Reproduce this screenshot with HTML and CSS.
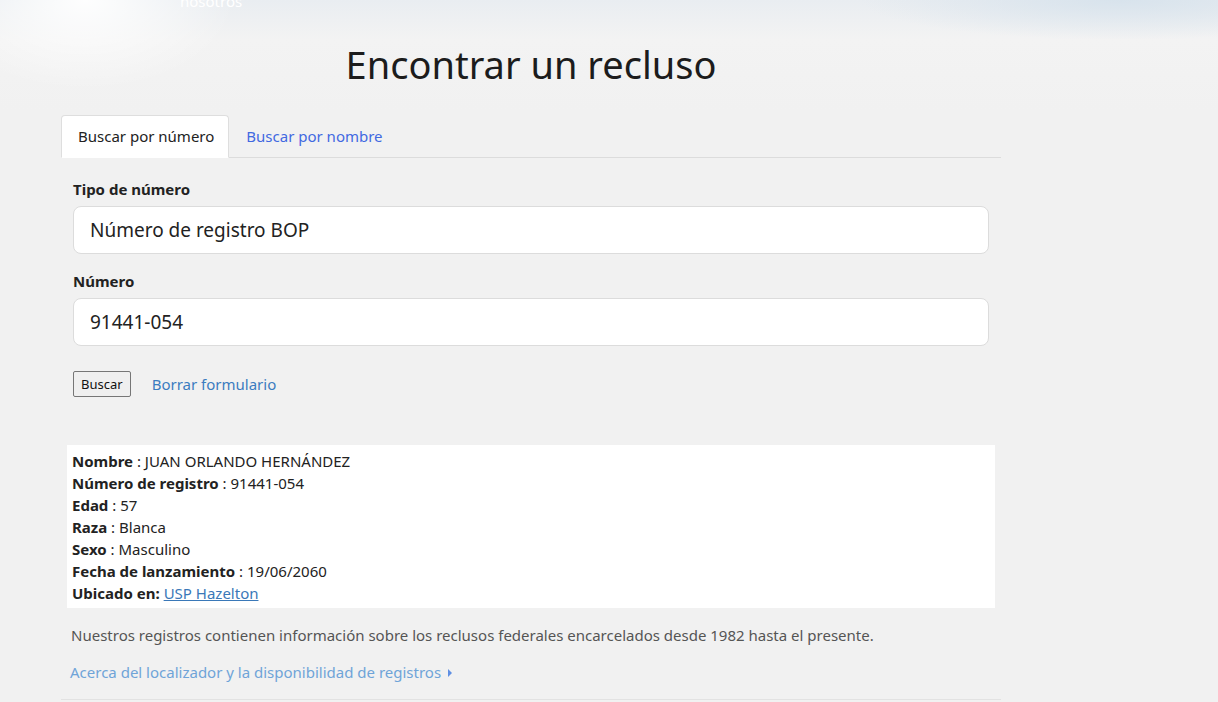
FILE: index.html
```html
<!DOCTYPE html>
<html lang="es">
<head>
    <meta charset="UTF-8">
    <meta name="viewport" content="width=device-width, initial-scale=1.0">
    <title>Encontrar un recluso</title>
    <link rel="stylesheet" href="styles.css">
</head>
<body>

    <!-- Top nav (scrolled, only the bottom of it shows) -->
    <div class="topnav">
        <a href="#" class="topnav-link">nosotros</a>
    </div>

    <div class="locator">
        <h1 class="page-title">Encontrar un recluso</h1>

        <!-- Tabs -->
        <ul class="tabs">
            <li class="tab active">Buscar por número</li>
            <li class="tab"><a href="#">Buscar por nombre</a></li>
        </ul>

        <!-- Search form -->
        <form class="search-form" onsubmit="return false">
            <label class="field-label" for="numType">Tipo de número</label>
            <div class="field-box" id="numType">Número de registro BOP</div>

            <label class="field-label" for="numValue">Número</label>
            <input class="field-box" id="numValue" type="text" value="91441-054">

            <div class="form-actions">
                <button class="btn-search" type="submit">Buscar</button>
                <a href="#" class="clear-link">Borrar formulario</a>
            </div>
        </form>

        <!-- Result -->
        <div class="result">
            <div><b>Nombre</b> : JUAN ORLANDO HERNÁNDEZ</div>
            <div><b>Número de registro</b> : 91441-054</div>
            <div><b>Edad</b> : 57</div>
            <div><b>Raza</b> : Blanca</div>
            <div><b>Sexo</b> : Masculino</div>
            <div><b>Fecha de lanzamiento</b> : 19/06/2060</div>
            <div><b>Ubicado en:</b> <a href="#" class="facility">USP Hazelton</a></div>
        </div>

        <p class="note">Nuestros registros contienen información sobre los reclusos federales encarcelados desde 1982 hasta el presente.</p>
        <a href="#" class="about-link">Acerca del localizador y la disponibilidad de registros <span class="caret"></span></a>

        <div class="bottom-rule"></div>
    </div>

</body>
</html>
```

FILE: styles.css
```css
/* Global Styles */
body {
    margin: 0;
    font-family: "Noto Sans", "Open Sans", sans-serif;
    font-size: 15px;
    color: #222;
    background-color: #f1f1f1;
    background-image:
        radial-gradient(ellipse 150px 90px at 85px 0, rgba(255, 255, 255, 0.95), rgba(255, 255, 255, 0) 100%),
        radial-gradient(ellipse 260px 40px at 1120px 0, rgba(214, 226, 236, 0.9), rgba(214, 226, 236, 0) 100%),
        linear-gradient(to bottom, #e9edf1 0, #f3f3f3 40px, #f1f1f1 110px);
    background-repeat: no-repeat;
    overflow: hidden;
}

a {
    text-decoration: none;
}

/* Top nav */
.topnav {
    height: 9px;
    overflow: hidden;
    display: flex;
    align-items: flex-end;
    padding-left: 180px;
}

.topnav-link {
    color: #fff;
    font-size: 15px;
    line-height: 16px;
}

/* Main block */
.locator {
    width: 940px;
    margin-left: 61px;
}

.page-title {
    margin: 31px 0 0;
    text-align: center;
    font-weight: 400;
    font-size: 38px;
    line-height: 48px;
    color: #1c1c1c;
}

/* Tabs */
.tabs {
    display: flex;
    list-style: none;
    margin: 27px 0 0;
    padding: 0;
    border-bottom: 1px solid #dcdcdc;
}

.tab {
    padding: 10px 16px 11px 16px;
    line-height: 20px;
    margin-bottom: -1px;
    border: 1px solid transparent;
    border-radius: 4px 4px 0 0;
}

.tab.active {
    background: #fff;
    border-color: #dedede;
    border-bottom-color: #fff;
    padding-right: 14px;
}

.tab a {
    color: #4169e1;
}

/* Form */
.search-form {
    padding: 21px 0 0 12px;
    width: 916px;
}

.field-label {
    display: block;
    font-weight: 700;
    line-height: 20px;
    margin-bottom: 7px;
}

.field-box {
    box-sizing: border-box;
    display: block;
    width: 916px;
    height: 48px;
    padding: 0 16px;
    border: 1px solid #dcdcdc;
    border-radius: 8px;
    background: #fff;
    font-family: inherit;
    font-size: 19px;
    line-height: 46px;
    color: #222;
    margin-bottom: 17px;
}

.form-actions {
    display: flex;
    align-items: center;
    gap: 21px;
    padding-top: 8px;
}

.btn-search {
    font-family: "Noto Sans", sans-serif;
    font-size: 13px;
    height: 26px;
    padding: 0 7px;
    color: #111;
    background: #efefef;
    border: 1px solid #767676;
    border-radius: 2px;
}

.clear-link {
    color: #3b7cc0;
}

/* Result */
.result {
    width: 918px;
    margin: 48px 0 0 6px;
    padding: 5px 5px 4px;
    background: #fff;
    line-height: 22px;
    color: #222;
}

.facility {
    color: #3a78b8;
    text-decoration: underline;
}

.note {
    margin: 16px 0 0 10px;
    line-height: 22px;
    color: #555;
}

.about-link {
    display: inline-block;
    margin: 15px 0 0 9px;
    line-height: 22px;
    color: #6fa4d8;
}

.caret {
    display: inline-block;
    width: 0;
    height: 0;
    margin-left: 3px;
    border-top: 4px solid transparent;
    border-bottom: 4px solid transparent;
    border-left: 4px solid #5f8fe3;
    vertical-align: 1px;
}

.bottom-rule {
    margin-top: 16px;
    border-top: 1px solid #e2e2e2;
}
```
